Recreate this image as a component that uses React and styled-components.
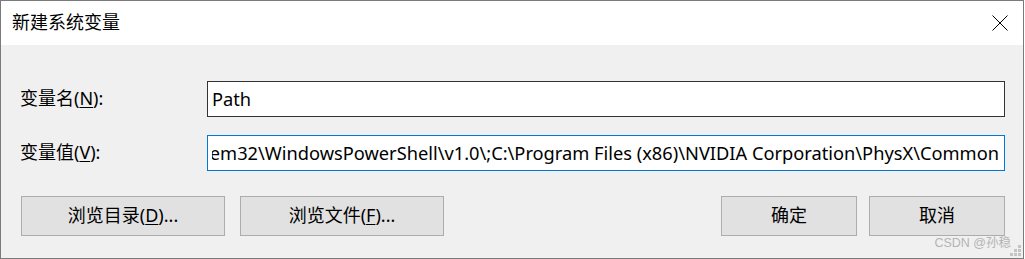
import styled, { createGlobalStyle } from "styled-components";

const GlobalStyle = createGlobalStyle`
  html, body {
    margin: 0;
    padding: 0;
    background: #ffffff;
  }
  * {
    box-sizing: border-box;
  }
`;

const font = `"Noto Sans", "Noto Sans CJK SC", sans-serif`;

export default function App() {
  return (
    <>
      <GlobalStyle />
      <Window>
        <TitleBar>
          <Title>新建系统变量</Title>
          <CloseButton aria-label="关闭">
            <svg width="16" height="16" viewBox="0 0 16 16">
              <path d="M0.5 0.5 L15.5 15.5 M15.5 0.5 L0.5 15.5" stroke="#000" strokeWidth="1" fill="none" />
            </svg>
          </CloseButton>
        </TitleBar>

        <Body>
          <Fields>
            <Label>
              变量名(<Key>N</Key>):
            </Label>
            <Field>
              <FieldText>Path</FieldText>
            </Field>

            <Label>
              变量值(<Key>V</Key>):
            </Label>
            <Field $focused>
              <FieldText $alignEnd>
                C:\WINDOWS\System32\WindowsPowerShell\v1.0\;C:\Program Files (x86)\NVIDIA Corporation\PhysX\Common
              </FieldText>
            </Field>
          </Fields>

          <Buttons>
            <Group $gap={15}>
              <Button $width={204}>
                浏览目录(<Key>D</Key>)...
              </Button>
              <Button $width={204}>
                浏览文件(<Key>F</Key>)...
              </Button>
            </Group>
            <Group $gap={12}>
              <Button $width={136}>确定</Button>
              <Button $width={136}>取消</Button>
            </Group>
          </Buttons>
        </Body>

        <Watermark>CSDN @孙稳</Watermark>
        <Grip viewBox="0 0 11 11" width="11" height="11">
          <rect x="8" y="0" width="3" height="3" />
          <rect x="4" y="4" width="3" height="3" />
          <rect x="8" y="4" width="3" height="3" />
          <rect x="0" y="8" width="3" height="3" />
          <rect x="4" y="8" width="3" height="3" />
          <rect x="8" y="8" width="3" height="3" />
        </Grip>
      </Window>
    </>
  );
}

const Window = styled.div`
  position: relative;
  width: 1024px;
  height: 259px;
  border: 1px solid #7a7a7a;
  background: #f0f0f0;
  display: flex;
  flex-direction: column;
  font-family: ${font};
  color: #000;
`;

const TitleBar = styled.div`
  height: 44px;
  background: #ffffff;
  display: flex;
  align-items: center;
  justify-content: space-between;
  padding: 0 15px 0 11px;
`;

const Title = styled.div`
  font-size: 18px;
  line-height: 1.3;
`;

const CloseButton = styled.div`
  width: 16px;
  height: 16px;
  display: flex;
  svg {
    display: block;
  }
`;

const Body = styled.div`
  flex: 1;
  padding: 36px 18px 0 19px;
  display: flex;
  flex-direction: column;
  gap: 25px;
`;

const Fields = styled.div`
  display: grid;
  grid-template-columns: 187px 1fr;
  row-gap: 18px;
  align-items: center;
`;

const Label = styled.div`
  font-size: 18px;
  line-height: 1.3;
  white-space: nowrap;
`;

const Key = styled.span`
  text-decoration: underline;
  text-underline-offset: 2px;
`;

const Field = styled.div`
  height: 36px;
  background: #ffffff;
  border: 1px solid ${(p) => (p.$focused ? "#0078d7" : "#333333")};
  display: flex;
  align-items: center;
  padding: 0 5px 0 4px;
  overflow: hidden;
`;

const FieldText = styled.div`
  flex: 1;
  min-width: 0;
  display: flex;
  justify-content: ${(p) => (p.$alignEnd ? "flex-end" : "flex-start")};
  white-space: nowrap;
  font-size: 18.25px;
  line-height: 1.4;
  overflow: hidden;
`;

const Buttons = styled.div`
  display: flex;
  justify-content: space-between;
  padding-left: 1px;
`;

const Group = styled.div`
  display: flex;
  gap: ${(p) => p.$gap}px;
`;

const Button = styled.div`
  width: ${(p) => p.$width}px;
  height: 40px;
  background: #e1e1e1;
  border: 1px solid #adadad;
  display: flex;
  align-items: center;
  justify-content: center;
  font-size: 18px;
  line-height: 1.3;
`;

const Watermark = styled.div`
  position: absolute;
  right: 12px;
  bottom: 9px;
  font-family: "Liberation Sans", "Noto Sans CJK SC", sans-serif;
  font-size: 12.5px;
  line-height: 1;
  color: #b4b4b4;
`;

const Grip = styled.svg`
  position: absolute;
  right: 2px;
  bottom: 2px;
  fill: #c4c4c4;
`;
